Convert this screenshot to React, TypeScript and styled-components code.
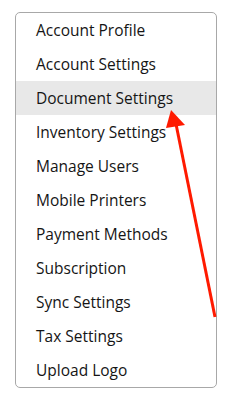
import React from "react";
import styled, { createGlobalStyle } from "styled-components";

const Global = createGlobalStyle`
  html, body { margin: 0; padding: 0; background: #fff; }
  body { font-family: "Open Sans", "Liberation Sans", sans-serif; }
`;

const Page = styled.div`
  position: relative;
  width: 236px;
  height: 412px;
  padding: 12px 0 0 15px;
  box-sizing: border-box;
`;

const Menu = styled.ul`
  list-style: none;
  margin: 0;
  padding: 0;
  width: 202px;
  box-sizing: border-box;
  border: 1px solid #a8a8a8;
  border-radius: 5px;
  background: #fff;
  overflow: hidden;
`;

const Item = styled.li<{ $active?: boolean }>`
  height: 34px;
  display: flex;
  align-items: center;
  padding-left: 20px;
  font-size: 15.5px;
  color: #151515;
  background: ${(p) => (p.$active ? "#e8e8e8" : "transparent")};
  white-space: nowrap;
`;

const Arrow = styled.svg`
  position: absolute;
  left: 0;
  top: 0;
  pointer-events: none;
`;

const items = [
  "Account Profile",
  "Account Settings",
  "Document Settings",
  "Inventory Settings",
  "Manage Users",
  "Mobile Printers",
  "Payment Methods",
  "Subscription",
  "Sync Settings",
  "Tax Settings",
  "Upload Logo",
];

export default function App() {
  return (
    <Page>
      <Global />
      <Menu>
        {items.map((t) => (
          <Item key={t} $active={t === "Document Settings"}>
            {t}
          </Item>
        ))}
      </Menu>
      <Arrow width="236" height="412" viewBox="0 0 236 412">
        <line x1="215" y1="317" x2="176" y2="124" stroke="#ff1a00" strokeWidth="3" />
        <polygon points="171,110 166,128 185,125" fill="#ff1a00" />
      </Arrow>
    </Page>
  );
}
